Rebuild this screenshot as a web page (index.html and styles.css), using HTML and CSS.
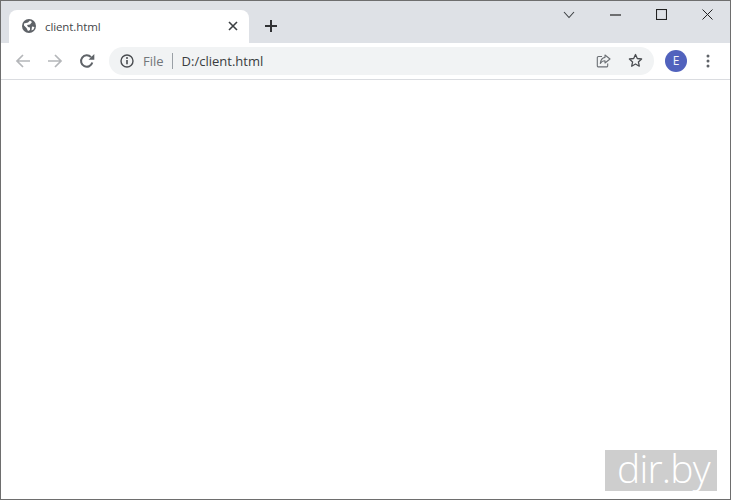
FILE: index.html
```html
<!DOCTYPE html>
<html lang="en">
<head>
<meta charset="utf-8">
<title>client.html</title>
<link rel="stylesheet" href="styles.css">
</head>
<body>
<div class="window">
  <header class="tabstrip">
    <div class="tab">
      <svg class="favicon" width="16" height="16" viewBox="0 0 16 16"><circle cx="8" cy="8" r="7" fill="#5f6368"/><path d="M3 5.500 7 4.500 9 2.500 11 4 9 6.500 6 7 7 9l2 .5v2.500L7 13 5.500 10 3 7.500zM11 8.500l2.500.5-1 2.500-2 1z" fill="#fff"/></svg>
      <span class="tab-title">client.html</span>
      <svg class="tab-close" width="10" height="10" viewBox="0 0 10 10"><path d="M1 1l8 8M9 1L1 9" stroke="#3c4043" stroke-width="1.600"/></svg>
    </div>
    <svg class="newtab" width="12" height="12" viewBox="0 0 12 12"><path d="M6 0v12M0 6h12" stroke="#303134" stroke-width="2"/></svg>
    <div class="caption">
      <span class="cap"><svg width="12" height="8" viewBox="0 0 12 8"><path d="M1 1l5 5.500L11 1" fill="none" stroke="#3c4043" stroke-width="1.100"/></svg></span>
      <span class="cap"><svg width="11" height="2" viewBox="0 0 11 2"><path d="M0 1h11" stroke="#222" stroke-width="1.200"/></svg></span>
      <span class="cap"><svg width="11" height="11" viewBox="0 0 11 11"><rect x=".5" y=".5" width="10" height="10" fill="none" stroke="#222" stroke-width="1.100"/></svg></span>
      <span class="cap"><svg width="11" height="11" viewBox="0 0 11 11"><path d="M.5.500l10 10M10.500.500l-10 10" stroke="#222" stroke-width="1"/></svg></span>
    </div>
  </header>
  <nav class="toolbar">
    <svg class="nav-icon" width="16" height="16" viewBox="0 0 16 16"><path d="M15 8H2M8 2L2 8l6 6" fill="none" stroke="#b4b6b9" stroke-width="1.700"/></svg>
    <svg class="nav-icon" width="16" height="16" viewBox="0 0 16 16"><path d="M1 8h13M8 2l6 6-6 6" fill="none" stroke="#b4b6b9" stroke-width="1.700"/></svg>
    <svg class="nav-icon" width="16" height="16" viewBox="0 0 16 16"><path d="M13.300 9.500A5.700 5.700 0 1 1 12 4.200" fill="none" stroke="#5f6368" stroke-width="2"/><path d="M9.500 6.800h5.800V1z" fill="#5f6368"/></svg>
    <div class="omnibox">
      <svg class="info" width="14" height="14" viewBox="0 0 14 14"><circle cx="7" cy="7" r="6" fill="none" stroke="#4a4d51" stroke-width="1.400"/><path d="M7 6v4.200" stroke="#4a4d51" stroke-width="1.600"/><circle cx="7" cy="4" r="1" fill="#4a4d51"/></svg>
      <span class="scheme">File</span>
      <span class="sep"></span>
      <span class="url">D:/client.html</span>
      <svg class="share" width="15" height="14" viewBox="0 0 15 14"><path d="M6 2.500H2.500A1.200 1.200 0 0 0 1.300 3.700v8A1.200 1.200 0 0 0 2.500 12.900h8a1.200 1.200 0 0 0 1.200-1.200V9.500" fill="none" stroke="#6b6f74" stroke-width="1.100"/><path d="M9 1l5 4-5 4V6.800C7 6.800 5.500 7.500 4.300 9.500 4.600 6.300 6.300 3.800 9 3.400z" fill="none" stroke="#6b6f74" stroke-width="1.100" stroke-linejoin="round"/></svg>
      <svg class="star" width="15" height="15" viewBox="0 0 15 15"><path d="M7.500 1.500l1.800 4 4.300.5-3.200 2.900.9 4.300-3.800-2.200-3.800 2.200.9-4.300L1.400 6l4.300-.5z" fill="none" stroke="#4a4d51" stroke-width="1.300" stroke-linejoin="round"/></svg>
    </div>
    <span class="avatar">E</span>
    <svg class="menu" width="4" height="14" viewBox="0 0 4 14"><circle cx="2" cy="2" r="1.500" fill="#5f6368"/><circle cx="2" cy="7" r="1.500" fill="#5f6368"/><circle cx="2" cy="12" r="1.500" fill="#5f6368"/></svg>
  </nav>
  <main class="page">
    <div class="watermark">dir.by</div>
  </main>
</div>
</body>
</html>
```
FILE: styles.css
```css
* { box-sizing: border-box; }
html, body { margin: 0; height: 100%; overflow: hidden; }
body { font-family: "Open Sans", "Noto Sans", sans-serif; background: #fff; }

.window {
  width: 731px;
  height: 500px;
  border: 1px solid #6e6e6e;
  display: flex;
  flex-direction: column;
}

.tabstrip {
  height: 42px;
  flex: none;
  background: #dee1e6;
  display: flex;
  align-items: flex-end;
  padding-left: 8px;
}

.tab {
  width: 240px;
  height: 33px;
  background: #fff;
  border-radius: 8px 8px 0 0;
  display: flex;
  align-items: center;
  padding: 0 11px 1px 12px;
}
.favicon { flex: none; }
.tab-title { margin-left: 8px; font-size: 11.500px; color: #45474a; flex: 1; letter-spacing: -.1px; }
.tab-close { flex: none; }

.newtab { flex: none; margin: 0 0 11px 16px; }

.caption { margin-left: auto; align-self: flex-start; display: flex; height: 27px; }
.cap { width: 46px; display: flex; align-items: center; justify-content: center; }

.toolbar {
  height: 37px;
  flex: none;
  background: #fff;
  border-bottom: 1px solid #dadce0;
  display: flex;
  align-items: center;
  padding: 0 14px 1px 14px;
}
.nav-icon { flex: none; margin-right: 16px; }
.nav-icon:nth-child(3) { margin-right: 14px; }

.omnibox {
  width: 545px;
  height: 28px;
  border-radius: 14px;
  background: #f1f3f4;
  display: flex;
  align-items: center;
  padding: 0 11px;
  font-size: 13px;
}
.info { flex: none; }
.scheme { margin-left: 9px; color: #72767a; }
.sep { width: 1px; height: 16px; background: #9aa0a6; margin: 0 9px 0 8px; }
.url { color: #3a3c3f; flex: 1; }
.share { flex: none; margin-right: 17px; }
.star { flex: none; }

.avatar {
  flex: none;
  width: 22px;
  height: 22px;
  border-radius: 50%;
  margin-left: 11px;
  background: #5162bd;
  color: #f4f5fb;
  font-size: 12px;
  display: flex;
  align-items: center;
  justify-content: center;
}
.menu { flex: none; margin-left: 19px; }

.page {
  flex: 1;
  background: #fff;
  display: flex;
  justify-content: flex-end;
  align-items: flex-end;
  padding: 0 13px 8px 0;
}
.watermark {
  width: 112px;
  height: 41px;
  background: #cecece;
  color: #fff;
  font-size: 39px;
  font-weight: 300;
  line-height: 36px;
  padding-left: 12px;
  letter-spacing: -.8px;
  white-space: nowrap;
}
```
